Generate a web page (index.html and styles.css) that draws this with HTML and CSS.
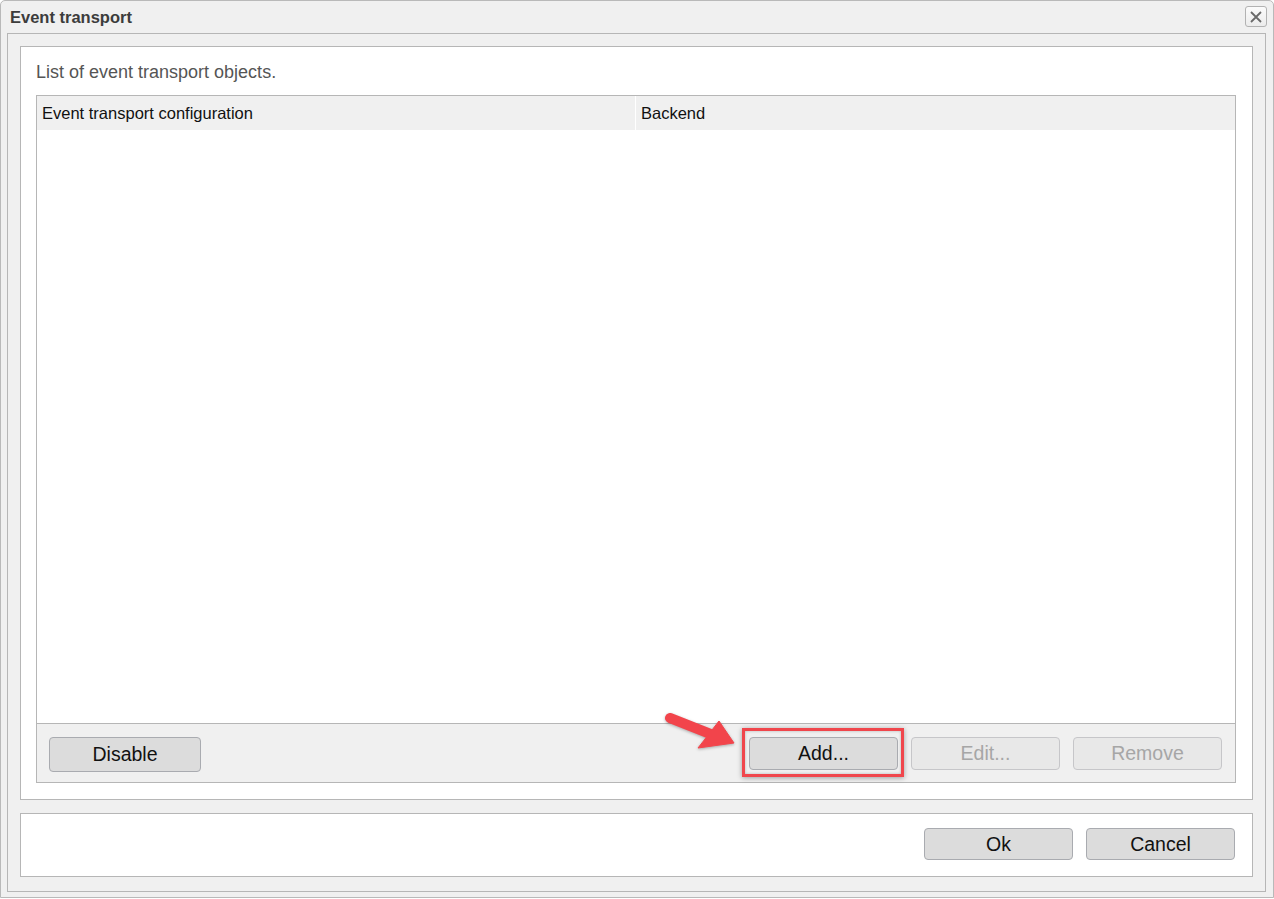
FILE: index.html
```html
<!DOCTYPE html>
<html>
<head>
<meta charset="utf-8">
<title>Event transport</title>
<link rel="stylesheet" href="styles.css">
</head>
<body>
<div class="dialog">
  <div class="titlebar">
    <span class="title">Event transport</span>
    <button class="close" aria-label="Close">
      <svg width="14" height="14" viewBox="0 0 14 14"><path d="M2 2 L12 12 M12 2 L2 12" stroke="#6a6a6a" stroke-width="1.8" fill="none"/></svg>
    </button>
  </div>
  <div class="frame">
    <div class="panel main">
      <div class="desc">List of event transport objects.</div>
      <div class="table">
        <div class="thead">
          <div class="th col1">Event transport configuration</div>
          <div class="th col2">Backend</div>
        </div>
        <div class="tbody"></div>
        <div class="toolbar">
          <button class="btn btn-tall">Disable</button>
          <div class="right-group">
            <div class="highlight-wrap">
              <svg class="arrow" width="90" height="48" viewBox="0 0 90 48">
                <g fill="#f2444b" stroke="#f2444b">
                  <line x1="9" y1="10" x2="52" y2="27" stroke-width="10" stroke-linecap="round"/>
                  <polygon points="58,13 73,35 37,40" stroke-width="1" stroke-linejoin="round"/>
                </g>
              </svg>
              <div class="highlight"></div>
              <button class="btn">Add...</button>
            </div>
            <button class="btn" disabled>Edit...</button>
            <button class="btn" disabled>Remove</button>
          </div>
        </div>
      </div>
    </div>
    <div class="panel footer">
      <button class="btn">Ok</button>
      <button class="btn">Cancel</button>
    </div>
  </div>
</div>
</body>
</html>
```
FILE: styles.css
```css
html, body {
  margin: 0;
  padding: 0;
  background: #ffffff;
}
body {
  width: 1274px;
  height: 899px;
  font-family: "Liberation Sans", Arial, sans-serif;
}
.dialog {
  box-sizing: border-box;
  width: 1274px;
  height: 898px;
  border: 1px solid #b9b9b9;
  border-radius: 5px 5px 0 0;
  background: #f0f0f0;
  padding: 0 7px 5px 6px;
  display: flex;
  flex-direction: column;
}
.titlebar {
  height: 32px;
  display: flex;
  align-items: center;
  padding-left: 3px;
  position: relative;
}
.title {
  font-weight: bold;
  font-size: 16.5px;
  color: #3c3c3c;
}
.close {
  position: absolute;
  right: -1px;
  top: 5px;
  width: 22px;
  height: 21px;
  box-sizing: border-box;
  border: 1px solid #b2b2b2;
  border-radius: 3px;
  background: linear-gradient(#fbfbfb, #ececec);
  padding: 0;
  display: flex;
  align-items: center;
  justify-content: center;
}
.frame {
  flex: 1;
  border: 1px solid #b6b6b6;
  padding: 12px 12px 14px 12px;
  display: flex;
  flex-direction: column;
  gap: 13px;
}
.panel {
  border: 1px solid #b6b6b6;
  background: #ffffff;
}
.main {
  flex: 1;
  display: flex;
  flex-direction: column;
  padding: 14px 16px 16px 15px;
}
.desc {
  font-size: 18px;
  line-height: 22px;
  color: #555555;
  margin-bottom: 12px;
}
.table {
  flex: 1;
  border: 1px solid #b6b6b6;
  display: flex;
  flex-direction: column;
}
.thead {
  height: 34px;
  display: flex;
  background: #f0f0f0;
}
.th {
  font-size: 16.5px;
  color: #111111;
  display: flex;
  align-items: center;
  padding-left: 5px;
  box-sizing: border-box;
}
.col1 {
  width: 599px;
  border-right: 1px solid #ffffff;
}
.col2 {
  flex: 1;
}
.tbody {
  flex: 1;
  background: #ffffff;
}
.toolbar {
  border-top: 1px solid #b6b6b6;
  background: #f0f0f0;
  height: 59px;
  box-sizing: border-box;
  display: flex;
  align-items: flex-start;
  padding: 13px 13px 0 12px;
}
.right-group {
  margin-left: auto;
  display: flex;
  gap: 13px;
}
.btn {
  box-sizing: border-box;
  width: 149px;
  height: 33px;
  border: 1px solid #a9abb0;
  border-radius: 4px;
  background: #dcdcdc;
  font-family: "Liberation Sans", Arial, sans-serif;
  font-size: 19.5px;
  color: #111111;
  padding: 0;
}
.btn-tall {
  width: 152px;
  height: 35px;
}
.btn:disabled {
  background: #e8e8e8;
  border-color: #c6c6c9;
  color: #a6a6a6;
}
.highlight-wrap {
  position: relative;
  display: flex;
}
.highlight-wrap .btn {
  position: relative;
}
.highlight {
  position: absolute;
  left: -7px;
  top: -9px;
  width: 162px;
  height: 49px;
  box-sizing: border-box;
  border: 3px solid #f0464c;
  box-shadow: 0 1px 5px rgba(0, 0, 0, 0.35), inset 0 0 3px rgba(0, 0, 0, 0.25);
}
.arrow {
  position: absolute;
  left: -88px;
  top: -29px;
  filter: drop-shadow(0 1px 1.5px rgba(0, 0, 0, 0.3));
}
.footer {
  height: 64px;
  box-sizing: border-box;
  display: flex;
  justify-content: flex-end;
  align-items: flex-start;
  gap: 13px;
  padding: 14px 17px 0 0;
}
.footer .btn {
  height: 32px;
}
```
